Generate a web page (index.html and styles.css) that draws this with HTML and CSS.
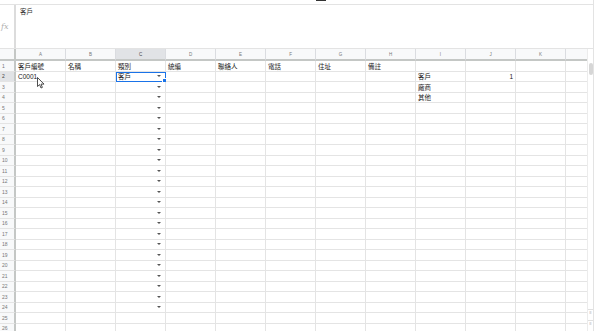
FILE: index.html
```html
<!DOCTYPE html>
<html lang="zh-Hant">
   <head>
      <meta charset="UTF-8">
      <meta name="viewport" content="width=device-width, initial-scale=1.0">
      <title>客戶資料</title>
      <link rel="stylesheet" href="styles.css">
   </head>
   <body>
      <div class="app">
         <div class="topbar"><div class="tab-mark"></div></div>
         <div class="formula">
            <div class="fx">fx</div>
            <div class="formula-text">客戶</div>
         </div>
         <div class="main">
            <div class="sheet" id="sheet"></div>
            <div class="vscroll">
               <div class="thumb"></div>
               <div class="spacer"></div>
               <div class="scroll-btn">≡</div>
               <div class="scroll-btn">≡</div>
            </div>
         </div>
      </div>
      <svg class="cursor" width="8" height="12" viewBox="0 0 8 12">
         <path d="M0.5 0.5 L0.5 9.5 L2.6 7.6 L4 11 L5.4 10.4 L4 7.1 L7 7.1 Z" fill="#fff" stroke="#222" stroke-width="0.8" stroke-linejoin="round"/>
      </svg>
      <script>
         document.addEventListener('DOMContentLoaded', () => {
             const sheet = document.getElementById('sheet');
             const cols = ['A', 'B', 'C', 'D', 'E', 'F', 'G', 'H', 'I', 'J', 'K', ''];
             const data = {
                 1: { A: '客戶編號', B: '名稱', C: '類別', D: '統編', E: '聯絡人', F: '電話', G: '住址', H: '備註' },
                 2: { A: 'C0001', C: '客戶', I: '客戶', J: 1 },
                 3: { I: '廠商' },
                 4: { I: '其他' }
             };

             // column header row
             const corner = document.createElement('div');
             corner.className = 'corner';
             sheet.appendChild(corner);
             cols.forEach(c => {
                 const h = document.createElement('div');
                 h.className = 'col-head' + (c === 'C' ? ' active' : '');
                 h.textContent = c;
                 sheet.appendChild(h);
             });

             // data rows
             for (let r = 1; r <= 26; r++) {
                 const rh = document.createElement('div');
                 rh.className = 'row-head' + (r === 2 ? ' active' : '');
                 rh.textContent = r;
                 sheet.appendChild(rh);
                 cols.forEach(c => {
                     const cell = document.createElement('div');
                     cell.className = 'cell';
                     const value = data[r] && data[r][c];
                     if (value !== undefined) {
                         const span = document.createElement('span');
                         span.textContent = value;
                         cell.appendChild(span);
                         if (typeof value === 'number') cell.classList.add('num');
                     }
                     if (c === 'C' && r >= 2 && r <= 24) {
                         const arrow = document.createElement('i');
                         arrow.className = 'drop';
                         cell.appendChild(arrow);
                     }
                     if (c === 'C' && r === 2) cell.classList.add('selected');
                     sheet.appendChild(cell);
                 });
             }
         });
      </script>
   </body>
</html>
```

FILE: styles.css
```css
/* Sheet layout */
body {
margin: 0;
width: 598px;
height: 331px;
overflow: hidden;
background-color: #fff;
font-family: "Liberation Sans", "Noto Sans CJK TC", sans-serif;
color: #222;
}
.app {
width: 593px;
height: 331px;
border-right: 1px solid #e3e3e3;
display: flex;
flex-direction: column;
}
.topbar {
height: 4px;
border-bottom: 1px solid #e3e3e3;
flex-shrink: 0;
}
.tab-mark {
margin-left: 316px;
width: 10px;
height: 1px;
background-color: #333;
}
.formula {
display: flex;
height: 43px;
flex-shrink: 0;
border-bottom: 1px solid #e3e3e3;
}
.fx {
width: 16px;
border-right: 2px solid #dcdcdc;
font-family: "DejaVu Serif", serif;
font-style: italic;
font-size: 8px;
color: #b0b0b0;
display: flex;
align-items: center;
padding-left: 1px;
box-sizing: border-box;
}
.formula-text {
font-size: 6.5px;
color: #333;
padding: 1px 0 0 4px;
}
.main {
display: flex;
flex: 1;
min-height: 0;
}
.sheet {
display: grid;
grid-template-columns: 16px repeat(11, 50px) 22px;
grid-template-rows: 12px;
grid-auto-rows: 10.5px;
width: 588px;
overflow: hidden;
}
.corner, .col-head, .row-head {
background-color: #f8f9fa;
color: #777;
box-sizing: border-box;
}
.corner {
border-right: 2px solid #c4c7c5;
border-bottom: 2px solid #c4c7c5;
}
.col-head {
font-size: 4.5px;
display: flex;
align-items: center;
justify-content: center;
border-right: 1px solid #dadce0;
border-bottom: 2px solid #c4c7c5;
}
.row-head {
font-size: 5px;
display: flex;
align-items: center;
padding-left: 2px;
border-right: 2px solid #c4c7c5;
border-bottom: 1px solid #e4e4e4;
}
.col-head.active, .row-head.active {
background-color: #e1e3e6;
color: #444;
}
.cell {
font-size: 6.5px;
display: flex;
align-items: center;
padding: 0 2px;
border-right: 1px solid #e4e4e4;
border-bottom: 1px solid #e4e4e4;
box-sizing: border-box;
white-space: nowrap;
position: relative;
}
.cell.num {
justify-content: flex-end;
}
.drop {
margin-left: auto;
margin-right: 2px;
width: 0;
height: 0;
border-left: 2px solid transparent;
border-right: 2px solid transparent;
border-top: 2.5px solid #555;
}
.cell.selected {
outline: 1px solid #1a73e8;
outline-offset: -1px;
}
.cell.selected::after {
content: "";
position: absolute;
right: -2px;
bottom: -2px;
width: 3px;
height: 3px;
background-color: #1a73e8;
border: 0.5px solid #fff;
}
.vscroll {
width: 5px;
display: flex;
flex-direction: column;
align-items: center;
border-left: 1px solid #ececec;
}
.thumb {
margin-top: 14px;
width: 4px;
height: 12px;
border-radius: 2px;
background-color: #d6d6d6;
}
.spacer {
flex: 1;
}
.scroll-btn {
width: 5px;
height: 6px;
margin-bottom: 4px;
font-size: 4px;
line-height: 6px;
text-align: center;
color: #777;
border-top: 1px solid #e0e0e0;
}
.cursor {
position: absolute;
left: 37px;
top: 77px;
}
```
